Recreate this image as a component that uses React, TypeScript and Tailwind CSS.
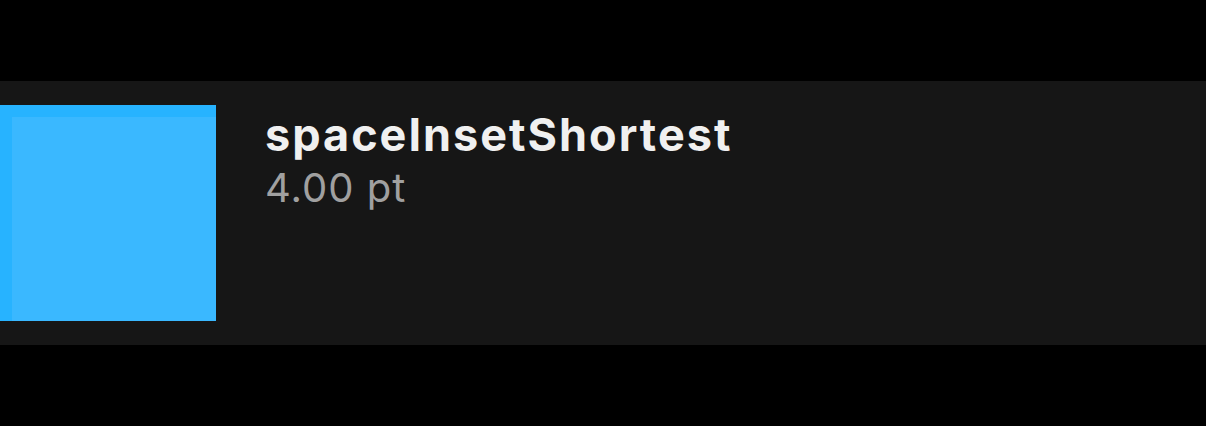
export default function App() {
  return (
    <div className="w-[1206px] h-[426px] bg-black pt-[81px]" style={{ fontFamily: "Inter, 'Noto Sans', sans-serif" }}>
      <div className="h-[264px] bg-[#161616] flex items-start py-[24px]">
        <div className="w-[216px] h-[216px] bg-[#27b3ff] pt-[12px] pl-[12px] shrink-0">
          <div className="w-full h-full bg-[#3ab8ff]" />
        </div>
        <div className="ml-[49px] flex flex-col">
          <div className="text-[45px] font-bold text-[#f0f0f0] leading-[45px] mt-[7px] tracking-[2px]">spaceInsetShortest</div>
          <div className="text-[40px] text-[#a0a0a0] leading-[40px] mt-[11px] tracking-[1px]">4.00 pt</div>
        </div>
      </div>
    </div>
  );
}
